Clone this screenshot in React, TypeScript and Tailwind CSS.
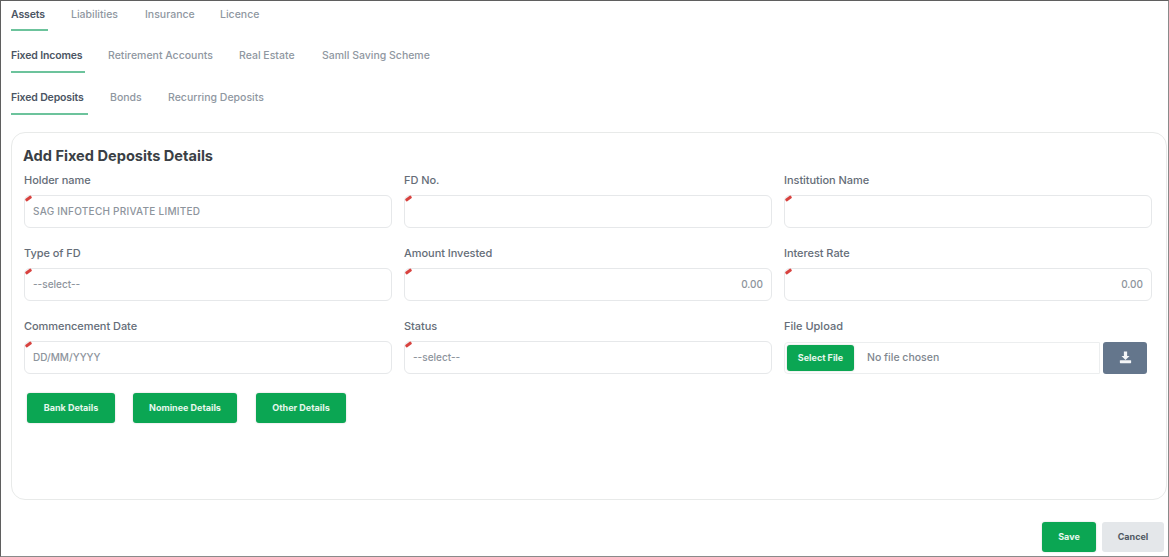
import React from "react";

function Tabs({ items, className }: { items: { label: string; cls: string }[]; className: string }) {
  return (
    <div className={"flex h-[42px] pl-[10px] " + className}>
      {items.map((t, i) => (
        <div key={t.label} className={"shrink-0 whitespace-nowrap text-[10.5px] leading-[14px] " + t.cls + (i === 0 ? " border-b-2 border-[#6cc39c] font-semibold tracking-[-0.15px] text-[#4b5563]" : " font-medium text-[#8f97a1]")}>
          {t.label}
        </div>
      ))}
    </div>
  );
}

function Flag() {
  return <span className="absolute left-[0px] top-[1px] h-[3px] w-[7px] -rotate-[35deg] rounded-[1px] bg-[#d8423f]" />;
}

function Field({ label, value, right, wide }: { label: string; value?: string; right?: boolean; wide?: boolean }) {
  return (
    <div className="flex flex-col">
      <div className="mb-[7px] h-[16px] text-[11px] leading-[16px] font-medium tracking-[-0.05px] text-[#656d78]">{label}</div>
      <div className={"relative flex h-[33px] items-center rounded-[6px] border border-[#e6e8ea] bg-white px-[8px] text-[10px] font-medium text-[#8d949c] " + (right ? "justify-end " : "") + (wide ? "tracking-[0.25px]" : "")}>
        <Flag />
        {value}
      </div>
    </div>
  );
}

function Green({ children, className }: { children: React.ReactNode; className: string }) {
  return (
    <div className={"flex items-center justify-center rounded-[3px] bg-[#0ba653] text-[9px] font-bold text-[#e6f7ed] shadow-[0_0_2px_rgba(0,0,0,0.2)] " + className}>
      {children}
    </div>
  );
}

export default function App() {
  return (
    <div className="h-[557px] w-[1169px] overflow-hidden border border-[#8a8a8a] border-l-[#5f5f5f] border-t-[#5f5f5f] bg-white font-['Inter',sans-serif]">
      <Tabs className="pt-[7px]" items={[
        { label: "Assets", cls: "h-[23px] w-[37px] mr-[23px]" },
        { label: "Liabilities", cls: "w-[74px]" },
        { label: "Insurance", cls: "w-[75px]" },
        { label: "Licence", cls: "w-[60px]" },
      ]} />
      <Tabs className="pt-[6px]" items={[
        { label: "Fixed Incomes", cls: "h-[24px] w-[74px] mr-[23px]" },
        { label: "Retirement Accounts", cls: "w-[131px]" },
        { label: "Real Estate", cls: "w-[83px]" },
        { label: "Samll Saving Scheme", cls: "w-[130px]" },
      ]} />
      <Tabs className="pt-[6px]" items={[
        { label: "Fixed Deposits", cls: "h-[24px] w-[77px] mr-[22px]" },
        { label: "Bonds", cls: "w-[58px]" },
        { label: "Recurring Deposits", cls: "w-[110px]" },
      ]} />
      <div className="ml-[10px] mr-[1px] mt-[5px] h-[368px] rounded-[14px] border border-[#e8eae9] pl-[11px] pr-[14px] pt-[13px]">
        <h1 className="h-[20px] text-[14.6px] leading-[20px] font-bold text-[#3a3f45]">Add Fixed Deposits Details</h1>
        <div className="mt-[6px] grid grid-cols-[368px_368px_368px] gap-x-[12px] gap-y-[17px] pl-[1px]">
          <Field label="Holder name" value="SAG INFOTECH PRIVATE LIMITED" wide />
          <Field label="FD No." />
          <Field label="Institution Name" />
          <Field label="Type of FD" value="--select--" />
          <Field label="Amount Invested" value="0.00" right />
          <Field label="Interest Rate" value="0.00" right />
          <Field label="Commencement Date" value="DD/MM/YYYY" />
          <Field label="Status" value="--select--" />
          <div className="flex flex-col">
            <div className="mb-[7px] h-[16px] text-[11px] leading-[16px] font-medium text-[#656d78]">File Upload</div>
            <div className="flex h-[33px] items-center">
              <div className="flex h-[32px] w-[316px] items-center rounded-l-[4px] border border-[#eceeef] pl-[2px]">
                <Green className="h-[26px] w-[67px]">Select File</Green>
                <span className="ml-[13px] text-[10.5px] font-medium text-[#80878f]">No file chosen</span>
              </div>
              <div className="ml-[3px] flex h-[32px] w-[44px] items-center justify-center rounded-[3px] bg-[#64768c]">
                <svg width="13" height="13" viewBox="0 0 12 12" fill="#f4f6f8">
                  <path d="M4.5 0.5h3v4h2.2L6 8.2 2.3 4.5h2.2z" />
                  <rect x="0.8" y="8.6" width="10.4" height="2.6" rx="0.5" />
                </svg>
              </div>
            </div>
          </div>
        </div>
        <div className="mt-[19px] flex pl-[4px]">
          <Green className="h-[30px] w-[88px]">Bank Details</Green>
          <Green className="ml-[18px] h-[30px] w-[104px]">Nominee Details</Green>
          <Green className="ml-[19px] h-[30px] w-[90px]">Other Details</Green>
        </div>
      </div>
      <div className="mt-[22px] flex justify-end gap-[6px] pr-[4px]">
        <Green className="h-[30px] w-[54px]">Save</Green>
        <div className="flex h-[30px] w-[62px] items-center justify-center rounded-[3px] bg-[#e4e7ea] text-[9px] font-bold text-[#4f5862]">Cancel</div>
      </div>
    </div>
  );
}
